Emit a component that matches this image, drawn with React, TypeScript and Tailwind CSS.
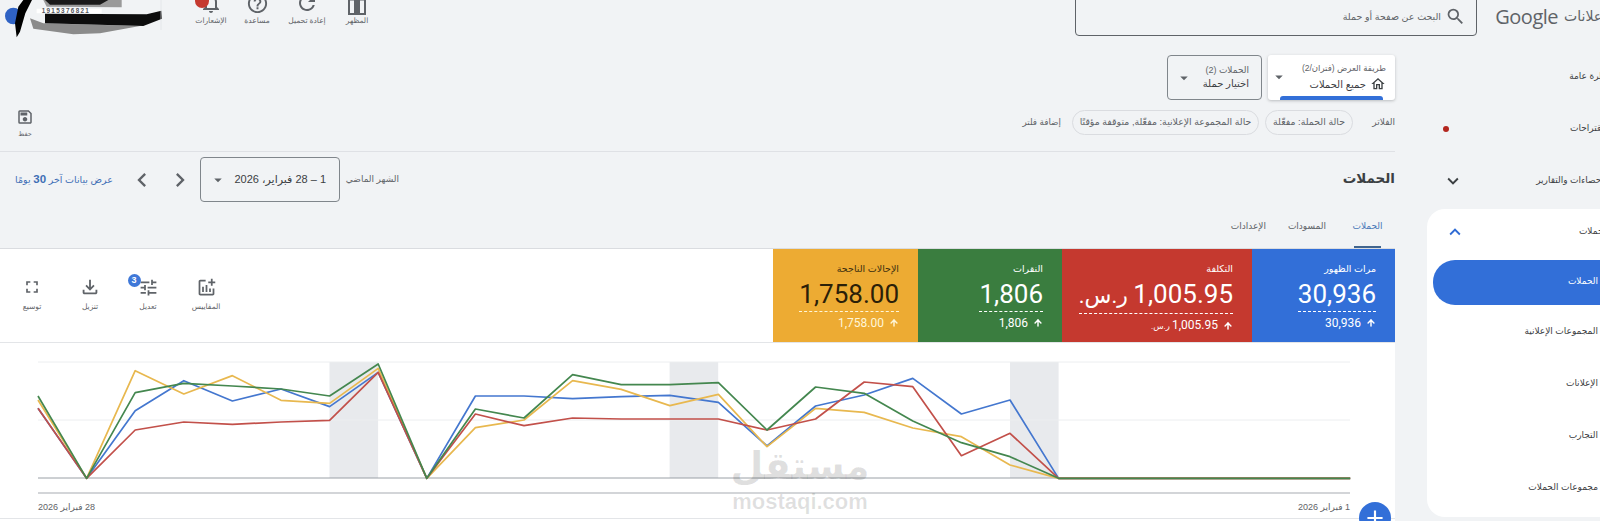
import React from "react";
import { ArrowUp } from "lucide-react";
import {
  MdSearch, MdOutlineSave, MdRefresh, MdHelpOutline, MdNotificationsNone, MdOutlineFileDownload, MdTune,
  MdKeyboardArrowDown, MdKeyboardArrowUp, MdChevronLeft, MdChevronRight, MdOutlineHome,
  MdAdd, MdOutlineAddchart, MdArrowDropDown, MdFullscreen,
} from "react-icons/md";

const series: { color: string; v: number[] }[] = [
  { color: "#4477cf", v: [205, 415, 212, 122, 183, 147, 200, 97, 415, 168, 168, 176, 170, 166, 187, 318, 198, 165, 115, 222, 180, 415, 415, 415, 415, 415, 415, 415] },
  { color: "#e8b84f", v: [180, 415, 92, 162, 107, 181, 190, 85, 415, 263, 240, 122, 148, 197, 163, 320, 205, 217, 264, 290, 375, 415, 415, 415, 415, 415, 415, 415] },
  { color: "#c2504a", v: [205, 415, 270, 246, 253, 246, 241, 97, 415, 222, 257, 234, 237, 237, 237, 270, 237, 126, 140, 347, 280, 415, 415, 415, 415, 415, 415, 415] },
  { color: "#44874f", v: [168, 415, 158, 130, 138, 147, 168, 72, 415, 207, 234, 104, 134, 134, 128, 270, 141, 160, 243, 308, 350, 415, 415, 415, 415, 415, 415, 415] },
];

function Chart() {
  return (
    <svg width="1395" height="155" viewBox="0 0 1395 155" className="block">
      <rect x="329.5" y="19" width="48.6" height="116" fill="#e8eaed" />
      <rect x="669.6" y="19" width="48.6" height="116" fill="#e8eaed" />
      <rect x="1010" y="19" width="48.6" height="116" fill="#e8eaed" />
      <line x1="38" x2="1350" y1="19" y2="19" stroke="#eceef0" strokeWidth="1" />
      <line x1="38" x2="1350" y1="77" y2="77" stroke="#eceef0" strokeWidth="1" />
      <line x1="38" x2="1350" y1="135" y2="135" stroke="#9aa0a6" strokeWidth="1" />
      <line x1="38" x2="1350" y1="150" y2="150" stroke="#c4c7cb" strokeWidth="1.5" />
      {series.map((s) => (
        <polyline
          key={s.color}
          fill="none"
          stroke={s.color}
          strokeWidth="1.7"
          strokeLinejoin="round"
          points={s.v.map((y, i) => `${38 + i * 48.6},${y / 3 - 3}`).join(" ")}
        />
      ))}
    </svg>
  );
}

function Scribble() {
  return (
    <svg width="170" height="42" viewBox="0 0 510 126" className="block shrink-0">
      <g className="blur-[1px]">
        <circle cx="40" cy="48" r="25" fill="#2f62c4" />
        <path d="M130 0H365V22L140 20Z" fill="#9a9a9a" />
        <path d="M135 0H325L300 14H150Z" fill="#1a1a1a" />
        <path d="M110 26H305V40H110Z" fill="#ffffff" />
        <path d="M90 55L100 86L220 103L300 100L420 78L130 70Z" fill="#8b8b8b" />
        <path d="M135 41L440 43L484 32L486 56L430 78L135 70Z" fill="#0d0d0d" />
        <path d="M96 0L76 40L60 95L50 112L45 70L55 20L70 0Z" fill="#000" />
      </g>
      <text x="125" y="38" fontSize="19" fontWeight="700" fill="#55585c" letterSpacing="4" direction="ltr" textAnchor="start" fontFamily="Liberation Sans, sans-serif">1915376821</text>
      <line x1="483" y1="0" x2="483" y2="90" stroke="#dfe1e5" strokeWidth="2" />
    </svg>
  );
}

function AppearanceIcon() {
  return (
    <svg width="18" height="24" viewBox="0 0 18 24" className="block">
      <path d="M1 8.5H6V2H12V8.5H17V23H1Z" fill="none" stroke="#5f6368" strokeWidth="2" />
      <path d="M6 8H12V23H6Z" fill="#5f6368" />
    </svg>
  );
}

function TopAction({ label, w, children }: { label: string; w: string; children: React.ReactNode }) {
  return (
    <div className={`${w} h-[27px] flex flex-col items-center justify-end self-start shrink-0`}>
      <div className="h-[24px] flex items-center justify-center relative">{children}</div>
      <span className="text-[7.5px] leading-[12px] text-[#5f6368] whitespace-nowrap">{label}</span>
    </div>
  );
}

function NavRow({ label, dot, chevron }: { label: string; dot?: boolean; chevron?: boolean }) {
  return (
    <div className="h-[52px] flex items-center justify-between">
      <span className="text-[9px] text-[#3c4043] whitespace-nowrap mr-[-9px]">{label}</span>
      {dot && <span className="w-[6px] h-[6px] rounded-full bg-[#b3261e] ml-[48px]" />}
      {chevron && <MdKeyboardArrowDown className="ml-[47px] text-[#3c4043]" size={22} />}
    </div>
  );
}

function Sidebar() {
  const item = "h-[52px] flex items-center text-[9px] text-[#3c4043] pr-[2px]";
  return (
    <div className="w-[205px] shrink-0 pt-[15px] overflow-hidden">
      <NavRow label="نظرة عامة" />
      <NavRow label="الاقتراحات" dot />
      <NavRow label="الإحصاءات والتقارير" chevron />
      <div className="ml-[32px] mt-[2px] h-[308px] bg-white rounded-l-[18px] pl-[6px]">
        <div className="h-[51px] flex items-center justify-between pb-[5px]">
          <span className="text-[9px] text-[#3c4043] mr-[-9px]">الحملات</span>
          <MdKeyboardArrowUp className="ml-[11px] text-[#2f6bd4]" size={22} />
        </div>
        <div className="h-[45px] rounded-l-[22px] bg-[#326fd8] flex items-center text-[9px] text-white pr-[2px] pb-[2px]">الحملات</div>
        <div className={`${item} mt-[1px]`}>المجموعات الإعلانية</div>
        <div className={item}>الإعلانات</div>
        <div className={item}>التجارب</div>
        <div className="h-[51px] flex items-center text-[9px] text-[#3c4043] pr-[2px]">مجموعات الحملات</div>
      </div>
    </div>
  );
}

function Metric({ w, bg, label, value, unit, sub, labelColor, valueColor, subColor, line }: {
  w: string; bg: string; label: string; value: string; unit?: string; sub: string;
  labelColor: string; valueColor: string; subColor: string; line: string;
}) {
  return (
    <div className={`${w} ${bg} shrink-0 pr-[19px] pt-[13px] flex flex-col items-start`}>
      <div className={`${labelColor} text-[9.5px] leading-[14px] whitespace-nowrap`}>{label}</div>
      <div className={`${valueColor} ${line} text-[26px] leading-[32px] mt-[2px] pb-[1px] border-b border-dashed whitespace-nowrap [font-family:Roboto,'DejaVu_Sans',sans-serif]`}>
        {value}
        {unit && <span className="text-[22px]"> {unit}</span>}
      </div>
      <div className={`${subColor} flex items-center gap-[5px] text-[12px] leading-[14px] mt-[4px] whitespace-nowrap [font-family:Roboto,'DejaVu_Sans',sans-serif]`}>
        <ArrowUp size={10} strokeWidth={3.5} />
        <span>
          {sub}
          {unit && <span className="text-[8.5px]"> {unit}</span>}
        </span>
      </div>
    </div>
  );
}

function Tool({ label, children }: { label: string; children: React.ReactNode }) {
  return (
    <div className="w-[58px] flex flex-col items-center shrink-0">
      <div className="h-[24px] flex items-center justify-center relative text-[#5f6368]">{children}</div>
      <span className="text-[7.5px] leading-[12px] text-[#5f6368] mt-[2px] whitespace-nowrap">{label}</span>
    </div>
  );
}

export default function App() {
  return (
    <div dir="rtl" className="w-[1600px] h-[521px] overflow-hidden bg-[#f1f3f5] flex flex-col [font-family:'Liberation_Sans','DejaVu_Sans',sans-serif]">
      {/* top bar */}
      <div className="h-[36px] shrink-0 flex items-start">
        <div className="w-[123px] h-[36px] shrink-0 flex items-center gap-[6px] overflow-hidden pb-[3px]">
          <span className="text-[14px] text-[#5f6368] whitespace-nowrap mr-[-6px]">إعلانات</span>
          <span dir="ltr" className="text-[20px] font-medium text-[#5f6368] [font-family:'Open_Sans',sans-serif] tracking-[-0.5px]">Google</span>
        </div>
        <div className="w-[402px] h-[60px] shrink-0 self-end border border-[#5f6368] rounded-[4px] flex items-end pb-[8px] pr-[10px] gap-[4px]">
          <MdSearch size={21} className="text-[#5f6368]" />
          <span className="text-[9.5px] leading-[20px] text-[#5f6368]">البحث عن صفحة أو حملة</span>
        </div>
        <div className="flex-1" />
        <TopAction label="المظهر" w="w-[50px]"><AppearanceIcon /></TopAction>
        <TopAction label="إعادة تحميل" w="w-[50px]"><MdRefresh size={24} className="text-[#5f6368]" /></TopAction>
        <TopAction label="مساعدة" w="w-[50px]"><MdHelpOutline size={23} className="text-[#5f6368]" /></TopAction>
        <TopAction label="الإشعارات" w="w-[42px]">
          <MdNotificationsNone size={24} className="text-[#5f6368]" />
          <span className="absolute left-[-4px] top-[3px] w-[14px] h-[14px] rounded-full bg-[#c5392f]" />
        </TopAction>
        <div className="w-[20px] shrink-0" />
        <Scribble />
      </div>

      <div className="flex flex-1 min-h-0">
        <Sidebar />
        {/* main */}
        <div className="w-[1395px] shrink-0 flex flex-col">
          <div className="flex pt-[19px] gap-[6px] h-[69px] shrink-0">
            <div className="w-[127px] h-[45px] bg-white rounded-[3px] shadow-[0_1px_3px_rgba(60,64,67,0.3)] flex flex-col pr-[9px] pt-[7px] overflow-hidden relative">
              <span className="text-[8.5px] leading-[12px] text-[#5f6368] whitespace-nowrap">طريقة العرض (فتران/2)</span>
              <div className="flex items-center justify-between mt-[2px] pl-[2px]">
                <span className="flex items-center gap-[4px] text-[10px] text-[#3c4043] whitespace-nowrap">
                  <MdOutlineHome size={16} className="text-[#3c4043]" />جميع الحملات
                </span>
                <MdArrowDropDown size={18} className="text-[#5f6368] mt-[-14px]" />
              </div>
              <div className="absolute bottom-0 left-[12px] right-[12px] h-[4px] bg-[#326fd8] rounded-t-[3px]" />
            </div>
            <div className="w-[95px] h-[45px] border border-[#80868b] rounded-[4px] flex items-center justify-between pr-[12px] pl-[7px]">
              <div className="flex flex-col">
                <span className="text-[9px] leading-[13px] text-[#5f6368] whitespace-nowrap">الحملات (2)</span>
                <span className="text-[10px] leading-[14px] text-[#3c4043] whitespace-nowrap">اختيار حملة</span>
              </div>
              <MdArrowDropDown size={18} className="text-[#5f6368]" />
            </div>
          </div>

          <div className="h-[35px] shrink-0 flex items-center">
            <span className="text-[9px] text-[#5f6368] w-[42px] shrink-0">الفلاتر</span>
            <span className="w-[88px] h-[25px] rounded-full border border-[#dadce0] flex items-center justify-center text-[9.4px] text-[#5f6368] whitespace-nowrap shrink-0">حالة الحملة: مفعّلة</span>
            <span className="w-[187px] h-[25px] mr-[6px] rounded-full border border-[#dadce0] flex items-center justify-center text-[9.4px] text-[#5f6368] whitespace-nowrap shrink-0">حالة المجموعة الإعلانية: مفعّلة, متوقفة مؤقتًا</span>
            <span className="mr-[11px] text-[8.8px] text-[#5f6368] whitespace-nowrap">إضافة فلتر</span>
            <div className="mr-auto ml-[12px] w-[26px] flex flex-col items-center">
              <div className="h-[22px] flex items-center"><MdOutlineSave size={18} className="text-[#5f6368]" /></div>
              <span className="text-[6.5px] leading-[12px] text-[#5f6368]">حفظ</span>
            </div>
          </div>

          <div className="h-[12px] shrink-0 border-b border-[#dfe1e5]" />

          <div className="h-[50px] shrink-0 pt-[5px] flex items-center justify-between pl-[15px]">
            <span className="text-[13.5px] font-bold text-[#3c4043]">الحملات</span>
            <div className="flex items-center">
              <span className="w-[59px] text-[9px] text-[#5f6368] whitespace-nowrap">الشهر الماضي</span>
              <div className="w-[140px] h-[45px] border border-[#80868b] rounded-[4px] flex items-center justify-between pr-[13px] pl-[8px]">
                <span className="text-[11px] text-[#3c4043] whitespace-nowrap">1 – 28 فبراير، 2026</span>
                <MdArrowDropDown size={18} className="text-[#5f6368]" />
              </div>
              <MdChevronRight size={28} className="mr-[6px] text-[#5f6368]" />
              <MdChevronLeft size={28} className="mr-[10px] text-[#5f6368]" />
              <span className="w-[98px] mr-[15px] text-[9.5px] text-[#3f6fb5] whitespace-nowrap">عرض بيانات آخر <span className="text-[11.5px] font-bold">30</span> يومًا</span>
            </div>
          </div>

          <div className="h-[46px] shrink-0 flex items-end pr-[13px] gap-[27px]">
            <div className="w-[29px] flex flex-col items-center">
              <span className="text-[9px] leading-[14px] text-[#4a78b8] mb-[13px] whitespace-nowrap">الحملات</span>
              <span className="h-[2px] w-[27px] bg-[#41658f]" />
            </div>
            <span className="w-[33px] text-[9px] leading-[14px] text-[#5f6368] mb-[15px] whitespace-nowrap">المسودات</span>
            <span className="w-[33px] text-[9px] leading-[14px] text-[#5f6368] mb-[15px] whitespace-nowrap">الإعدادات</span>
          </div>

          <div className="flex-1 bg-white border-t border-[#dadce0] flex flex-col min-h-0">
            <div className="h-[94px] shrink-0 flex border-b border-[#e3e5e8]">
              <Metric w="w-[143px]" bg="bg-[#326fd8]" label="مرات الظهور" value="30,936" sub="30,936" labelColor="text-white" valueColor="text-white" subColor="text-white" line="border-white" />
              <Metric w="w-[190px]" bg="bg-[#c5392f]" label="التكلفة" value="1,005.95" unit="ر.س." sub="1,005.95" labelColor="text-white" valueColor="text-white" subColor="text-white" line="border-white" />
              <Metric w="w-[144px]" bg="bg-[#3a7d3f]" label="النقرات" value="1,806" sub="1,806" labelColor="text-white" valueColor="text-white" subColor="text-white" line="border-white" />
              <Metric w="w-[145px]" bg="bg-[#edab33]" label="الإحالات الناجحة" value="1,758.00" sub="1,758.00" labelColor="text-[#3c2f10]" valueColor="text-[#2b2008]" subColor="text-[#fff6d8]" line="border-[#fff6d8]" />
              <div className="flex-1 flex items-center justify-end pl-[3px] pb-[3px]">
                <Tool label="المقاييس"><MdOutlineAddchart size={21} /></Tool>
                <Tool label="تعديل">
                  <MdTune size={21} />
                  <span className="absolute right-[18px] top-[-1px] w-[13px] h-[13px] rounded-full bg-[#3f78d8] text-white text-[9px] leading-[13px] text-center font-bold">3</span>
                </Tool>
                <Tool label="تنزيل"><MdOutlineFileDownload size={22} /></Tool>
                <Tool label="توسيع"><MdFullscreen size={20} /></Tool>
              </div>
            </div>
            <div dir="ltr" className="relative border-b border-[#e3e5e8] h-[176px] shrink-0">
              <Chart />
              <div className="h-[20px] flex items-center justify-between pl-[38px] pr-[45px] text-[9px] text-[#5f6368]">
                <span dir="rtl">28 فبراير 2026</span>
                <span dir="rtl">1 فبراير 2026</span>
              </div>
              <div className="absolute left-[732px] top-[96px] w-[136px] flex flex-col items-center text-[#000000]/12 pointer-events-none">
                <span className="text-[38px] leading-[54px] font-bold whitespace-nowrap">مستقل</span>
                <span className="text-[22px] leading-[18px] font-bold whitespace-nowrap">mostaqi.com</span>
              </div>
              <div className="absolute left-[1359px] top-[159px] w-[32px] h-[32px] rounded-full bg-[#326fd8] flex items-center justify-center text-white">
                <MdAdd size={26} />
              </div>
            </div>
          </div>
        </div>
      </div>
    </div>
  );
}
